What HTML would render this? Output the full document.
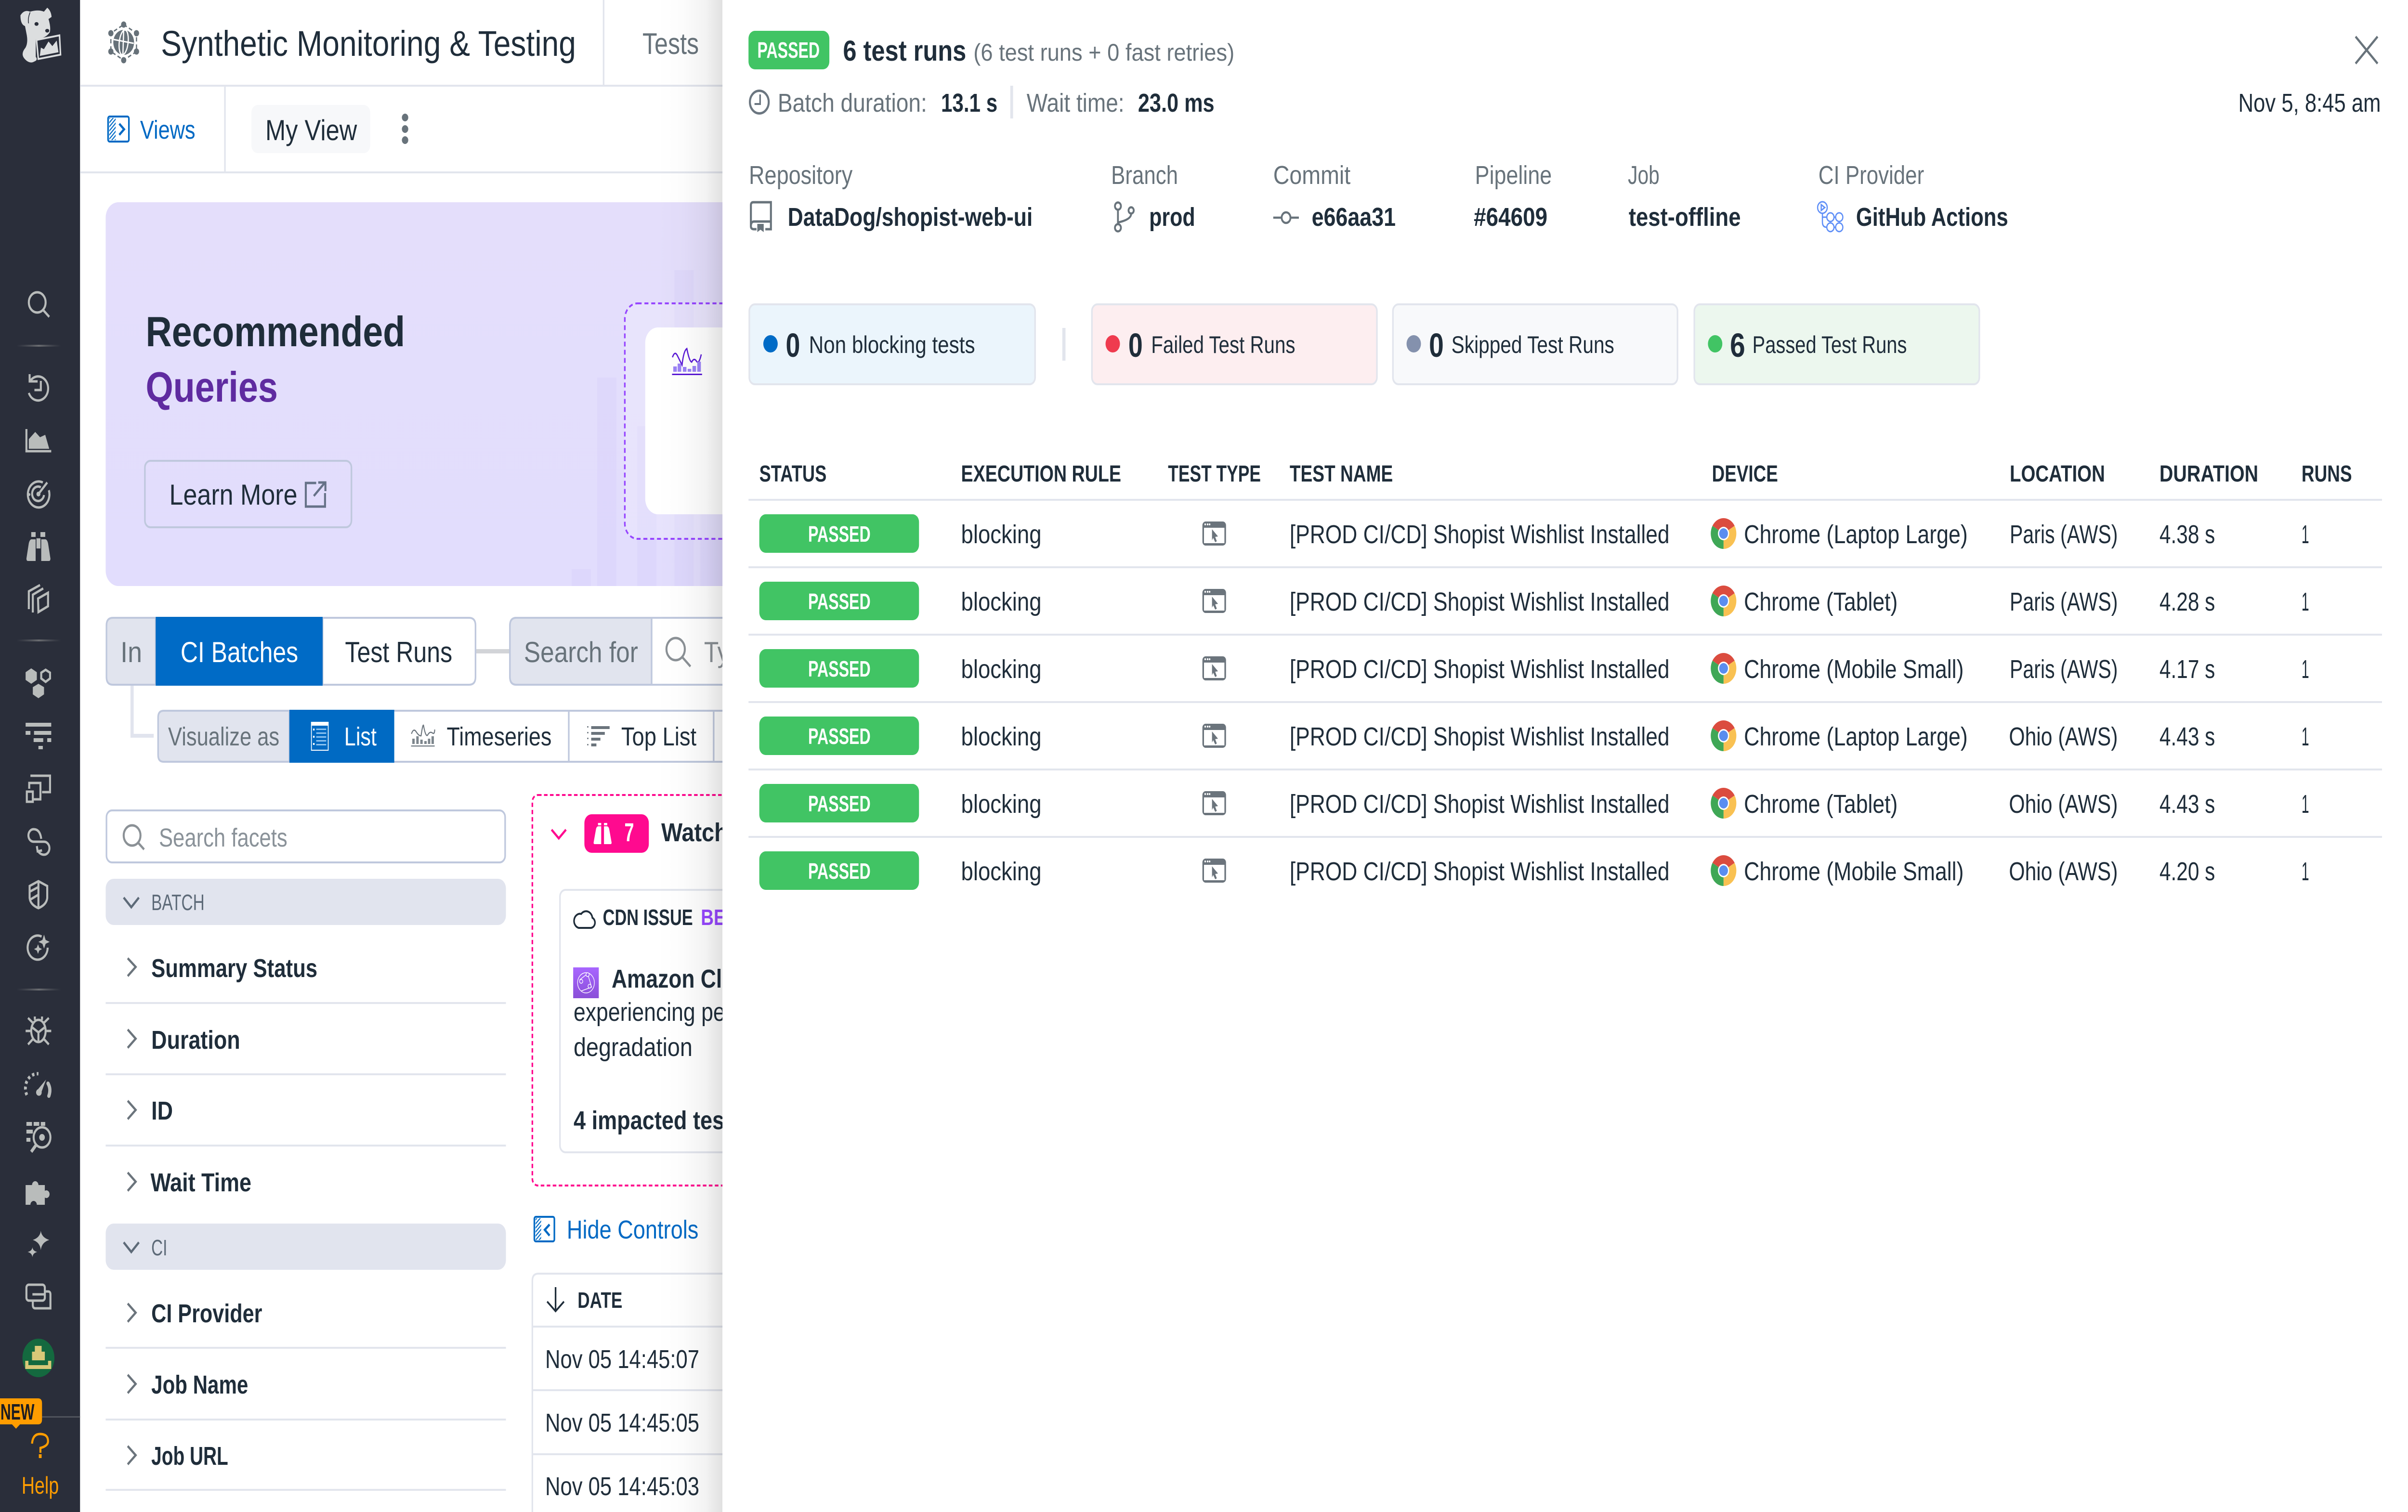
<!DOCTYPE html>
<html lang="en"><head><meta charset="utf-8"><title>Synthetic Monitoring &amp; Testing</title>
<style>
html,body{margin:0;padding:0;background:#fff}
svg{display:block;width:100vw;height:100vh}
text{font-family:"Liberation Sans","Noto Sans CJK JP",sans-serif;font-size:54px;fill:#1f2d3a;white-space:pre}
.b{font-weight:700}
.g{fill:#68737b}
.s{font-size:46px}
.t{font-size:48px;font-weight:700}
.m{font-size:50px}
.l{font-size:60px}
.i{fill:none;stroke:#b9bcbb;stroke-width:5}
.f{fill:#b9bcbb}
.bl{fill:#0069c4}
</style></head><body>
<svg xmlns="http://www.w3.org/2000/svg" viewBox="0 0 6016 3140" preserveAspectRatio="none">
<defs>
<pattern id="h" width="6" height="6" patternUnits="userSpaceOnUse" patternTransform="rotate(45)"><rect width="2.4" height="6" fill="#0069c4"/></pattern>
<linearGradient id="sd" x1="0" x2="1" y1="0" y2="0"><stop offset="0" stop-color="#000" stop-opacity="0"/><stop offset=".4" stop-color="#000" stop-opacity=".012"/><stop offset=".75" stop-color="#000" stop-opacity=".05"/><stop offset="1" stop-color="#000" stop-opacity=".12"/></linearGradient>
<linearGradient id="dv" x1="0" x2="1" y1="0" y2="0"><stop offset="0" stop-color="#55585f" stop-opacity="0"/><stop offset=".5" stop-color="#6a6c70"/><stop offset="1" stop-color="#55585f" stop-opacity="0"/></linearGradient>
<linearGradient id="am" x1="0" x2="0" y1="0" y2="1"><stop offset="0" stop-color="#a866ff"/><stop offset="1" stop-color="#8a4fd8"/></linearGradient>
<linearGradient id="bn" x1="0" x2="0" y1="0" y2="1"><stop offset="0" stop-color="#e4defb"/><stop offset="1" stop-color="#e2ddfd"/></linearGradient>
<g id="tt"><path d="M3004 1091a8 8 0 0 1 8-8h43a8 8 0 0 1 8 8v34a8 8 0 0 1-8 8h-43a8 8 0 0 1-8-8z" fill="#6b747c"/><rect x="3008" y="1096" width="51" height="32" fill="#fff"/><circle cx="3011" cy="1089" r="2" fill="#fff"/><circle cx="3017" cy="1089" r="2" fill="#fff"/><circle cx="3022" cy="1089" r="2" fill="#fff"/><path d="M3028 1099l15 15-7 1 4 9-4 2-5-9-3 5z" fill="#6b747c"/></g>
<g id="ch"><g transform="translate(4306 1108)"><path d="M0 0L-27.7-16A32 32 0 0 1 27.7-16Z" fill="#db4c3f"/><path d="M0 0L27.7-16A32 32 0 0 1 0 32Z" fill="#f9c152"/><path d="M0 0L0 32A32 32 0 0 1-27.7-16Z" fill="#3fa756"/><circle r="14" fill="#fff"/><circle r="11" fill="#5a8def"/></g></g>
</defs>

<rect width="6016" height="3140" fill="#fff"/>

<!-- sidebar -->
<rect width="200" height="3140" fill="#2a2e3a"/>
<g transform="scale(.638)" fill="#dcdedf">
<path d="M80 50Q95 30 118 38Q150 30 172 38L185 25Q200 35 202 55L190 62Q200 90 195 105Q180 125 140 128L140 185Q150 195 135 200Q115 210 95 190Q80 175 100 155Q110 140 105 115L98 85Q80 80 80 50Z"/>
<ellipse cx="143" cy="78" rx="8" ry="6" fill="#2a2e3a"/><ellipse cx="185" cy="100" rx="8" ry="6" fill="#2a2e3a"/>
<path d="M118 40Q108 60 112 76" fill="none" stroke="#2a2e3a" stroke-width="3"/>
<path d="M143 130L233 115L237 178L150 192Z" fill="#2a2e3a" stroke="#dcdedf" stroke-width="6"/>
<path d="M156 182L160 155L172 160L190 135L205 150L222 132L229 170Z"/>
</g>
<circle cx="93" cy="628" r="21" class="i"/><path d="M108 644L123 658" class="i"/>
<rect x="41" y="716" width="112" height="4" fill="url(#dv)"/>
<path d="M75 792A25 25 0 1 1 72 816" class="i"/><path d="M74 777V792H94M102 791V810H86" class="i"/>
<path d="M66 891V937H128" class="i"/><path d="M72 932V912L88 897L100 908L113 903L123 932Z" class="f"/>
<path d="M107 1002A27 27 0 1 0 122 1018M102 1012A15 15 0 1 0 110 1028" class="i"/><circle cx="96" cy="1026" r="5" class="f"/><path d="M96 1026L118 1002" class="i"/><circle cx="73" cy="1027" r="3" class="f"/>
<path d="M66 1160L72 1128Q74 1121 78 1120H89V1165H70Q66 1165 66 1160ZM126 1160L120 1128Q118 1121 114 1120H103V1165H122Q126 1165 126 1160Z" class="f"/><rect x="78" y="1105" width="11" height="10" class="f"/><rect x="101" y="1105" width="12" height="10" class="f"/><rect x="91" y="1118" width="10" height="21" class="f"/>
<path d="M72 1265V1228L100 1215M82 1272V1235L108 1222M95 1243L120 1231V1259L96 1271Z" class="i"/>
<rect x="41" y="1328" width="112" height="4" fill="url(#dv)"/>
<path d="M78 1388L92 1396V1412L78 1420L64 1412V1396Z" class="f"/><path d="M114 1391L125 1397V1409L114 1416L103 1409V1397Z" class="i"/><path d="M96 1420L110 1427V1442L96 1450L82 1442V1427Z" class="f"/>
<path d="M64 1501H128V1509H64ZM64 1518H76V1526H64ZM85 1518H128V1526H85ZM84 1533H108V1541H84ZM118 1533H128V1541H118ZM96 1549H107V1556H96Z" class="f"/>
<path d="M76 1611H125V1645H105M73 1638V1626H101V1660H84" class="i"/><rect x="67" y="1644" width="15" height="21" class="i"/>
<path d="M103 1742Q100 1722 84 1722A13 13 0 0 0 84 1748H110A13 13 0 0 1 110 1775Q100 1775 94 1766M92 1757L94 1768L105 1766" class="i"/>
<path d="M96 1830L118 1840V1865Q116 1879 96 1886Q76 1879 74 1865V1840Z" class="i"/><path d="M96 1830V1886M74 1852L96 1842M76 1868L96 1858" class="i"/>
<path d="M104 1945A25 25 0 1 0 119 1968" class="i"/><path d="M110 1941L114 1952L124 1956L114 1960L110 1970L106 1960L96 1956L106 1952ZM95 1961L98 1968L105 1971L98 1974L95 1981L92 1974L85 1971L92 1968Z" class="f"/>
<rect x="41" y="2053" width="112" height="4" fill="url(#dv)"/>
<ellipse cx="96" cy="2141" rx="18" ry="23" class="i"/><path d="M78 2132L96 2144L114 2132M96 2144V2164M64 2141H78M114 2141H128M70 2114L82 2124M122 2114L110 2124M70 2169L82 2158M122 2169L110 2158M87 2111V2118M105 2111V2118" class="i"/>
<path d="M67 2274A30 30 0 0 1 96 2230" fill="none" stroke="#b9bcbb" stroke-width="7" stroke-dasharray="6 6"/><path d="M115 2242L95 2262A7 7 0 1 0 104 2267Z" class="f"/><path d="M120 2250Q128 2262 122 2276" class="i" stroke-linecap="round" style="stroke-width:8"/>
<path d="M66 2330H80V2338H66ZM84 2330H98V2338H84ZM102 2330H113V2338H102ZM66 2346H82V2354H66ZM66 2363H76V2371H66Z" class="f"/><circle cx="105" cy="2362" r="21" class="i"/><circle cx="105" cy="2362" r="7" class="f"/><path d="M90 2378L78 2392" class="i" style="stroke-width:7"/>
<path d="M64 2461H80A8 8 0 1 1 96 2461H112V2473A8 8 0 1 1 112 2487V2502H92A8 8 0 1 0 76 2502H64Z" class="f"/>
<path d="M102 2556Q104 2570 123 2575Q104 2580 102 2596Q100 2580 82 2575Q100 2570 102 2556ZM81 2590Q82 2598 93 2600Q82 2602 81 2611Q80 2602 69 2600Q80 2598 81 2590Z" class="f"/>
<rect x="66" y="2668" width="46" height="33" rx="6" class="i"/><path d="M81 2688H112M112 2682H120Q126 2682 126 2688V2717H88Q82 2717 82 2710V2701" class="i"/>
<circle cx="96" cy="2820" r="40" fill="#14693f"/><path d="M87 2795H104V2807H112V2825H80V2807H87ZM63 2826H71V2835H120V2826H128V2843H63Z" fill="#d8c878"/>
<rect x="105" y="2941" width="95" height="3" fill="#50535c"/>
<path d="M0 2904H95Q105 2904 105 2914V2948Q105 2958 95 2958H50L40 2967L30 2958H0Z" fill="#ff9d00"/>
<text x="1" y="2948" class="b s" textLength="85" lengthAdjust="spacingAndGlyphs" style="fill:#1c1c22">NEW</text>
<path d="M80 2998Q82 2978 100 2978Q120 2978 120 2993Q120 3003 101 3007V3017" fill="none" stroke="#ff9d00" stroke-width="5"/><rect x="97" y="3020" width="7" height="8" fill="#ff9d00"/>
<text x="54" y="3102" class="m" textLength="93" lengthAdjust="spacingAndGlyphs" style="fill:#ff9d00">Help</text>

<!-- header -->
<rect x="200" y="176" width="1700" height="4" fill="#e2e5ed"/>
<rect x="200" y="356" width="1700" height="4" fill="#e2e5ed"/>
<rect x="560" y="180" width="4" height="176" fill="#e2e5ed"/>
<rect x="1506" y="0" width="4" height="176" fill="#e2e5ed"/>
<path d="M309 51L341 69V107L309 125L277 107V69Z" fill="none" stroke="#667179" stroke-width="3" stroke-dasharray="9 6"/>
<g fill="#667179"><circle cx="309" cy="51" r="6.5"/><circle cx="341" cy="69" r="6.5"/><circle cx="341" cy="107" r="6.5"/><circle cx="309" cy="125" r="6.5"/><circle cx="277" cy="107" r="6.5"/><circle cx="277" cy="69" r="6.5"/><circle cx="309" cy="88" r="26"/></g>
<ellipse cx="309" cy="88" rx="11" ry="26" fill="none" stroke="#fff" stroke-width="3" transform="rotate(8 309 88)"/><path d="M284 82L334 90M309 62L307 114" stroke="#fff" stroke-width="3" fill="none"/>
<text x="402" y="116" style="font-size:74px" textLength="1037" lengthAdjust="spacingAndGlyphs">Synthetic Monitoring &amp; Testing</text>
<text x="1605" y="112" style="font-size:62px" class="g" textLength="141" lengthAdjust="spacingAndGlyphs">Tests</text>
<rect x="270" y="242" width="52" height="52" rx="4" fill="none" stroke="#0069c4" stroke-width="4"/><rect x="273" y="245" width="16" height="46" fill="url(#h)"/><path d="M298 257L310 268.5L298 280" fill="none" stroke="#0069c4" stroke-width="5"/>
<text x="350" y="288" class="bl" textLength="138" lengthAdjust="spacingAndGlyphs">Views</text>
<rect x="628" y="218" width="297" height="100" rx="16" fill="#f7f8fa"/>
<text x="663" y="291" style="font-size:60px" textLength="229" lengthAdjust="spacingAndGlyphs">My View</text>
<g fill="#68737b"><circle cx="1012" cy="244" r="8"/><circle cx="1012" cy="268" r="8"/><circle cx="1012" cy="291" r="8"/></g>

<!-- banner -->
<path d="M296 420H1900V1217H296A32 32 0 0 1 264 1185V452A32 32 0 0 1 296 420Z" fill="url(#bn)"/>
<g fill="#7f5fe0" fill-opacity=".045"><rect x="1428" y="1182" width="48" height="35"/><rect x="1492" y="784" width="48" height="433"/><rect x="1592" y="885" width="48" height="332"/><rect x="1685" y="561" width="48" height="656"/><rect x="1750" y="1040" width="60" height="177"/></g>
<rect x="1561" y="630" width="400" height="489" rx="32" fill="#fff" fill-opacity=".2" stroke="#9747ff" stroke-width="4" stroke-dasharray="10 7"/>
<path d="M1644 680H1900V1068H1644A32 32 0 0 1 1612 1036V712A32 32 0 0 1 1644 680Z" fill="#fff"/>
<path d="M1680 742Q1686 728 1692 738T1704 758Q1708 728 1716 724Q1722 750 1728 752Q1734 742 1740 750T1752 736" fill="none" stroke="#5a19d6" stroke-width="3"/>
<g fill="#9b82f6"><rect x="1682" y="761" width="9" height="11"/><rect x="1693" y="755" width="9" height="17"/><rect x="1706" y="762" width="9" height="10"/><rect x="1718" y="766" width="9" height="6"/><rect x="1730" y="760" width="9" height="12"/><rect x="1742" y="751" width="9" height="21"/></g>
<rect x="1679" y="776" width="75" height="3" fill="#5a19d6"/>
<text x="364" y="719" class="b" style="font-size:88px" textLength="648" lengthAdjust="spacingAndGlyphs">Recommended</text>
<text x="364" y="834" class="b" style="font-size:88px;fill:#5f2ba0" textLength="330" lengthAdjust="spacingAndGlyphs">Queries</text>
<rect x="362" y="957" width="516" height="138" rx="14" fill="none" stroke="#bfc8dd" stroke-width="4"/>
<text x="423" y="1048" class="l" textLength="320" lengthAdjust="spacingAndGlyphs">Learn More</text>
<path d="M790 1003H764V1052H812V1024M784 1030L812 1002M795 1002H813V1020" fill="none" stroke="#667288" stroke-width="5"/>

<!-- query row -->
<path d="M806 1283H1172Q1188 1283 1188 1299V1406Q1188 1422 1172 1422H806Z" fill="#fff" stroke="#bfc8dd" stroke-width="4"/>
<path d="M389 1283H282Q266 1283 266 1299V1406Q266 1422 282 1422H389Z" fill="#e1e4ee" stroke="#bfc8dd" stroke-width="4"/>
<rect x="389" y="1281" width="417" height="143" fill="#006ac3"/><rect x="392" y="1284" width="411" height="137" fill="#006bc6"/>
<text x="301" y="1375" class="l g" textLength="54" lengthAdjust="spacingAndGlyphs">In</text>
<text x="451" y="1375" class="l" style="fill:#fff" textLength="294" lengthAdjust="spacingAndGlyphs">CI Batches</text>
<text x="862" y="1375" class="l" textLength="268" lengthAdjust="spacingAndGlyphs">Test Runs</text>
<rect x="1190" y="1348" width="83" height="9" fill="#d2d4d8"/>
<path d="M1900 1283H1290Q1274 1283 1274 1299V1406Q1274 1422 1290 1422H1900Z" fill="#fff" stroke="#bfc8dd" stroke-width="4"/>
<path d="M1628 1283H1290Q1274 1283 1274 1299V1406Q1274 1422 1290 1422H1628Z" fill="#e1e4ee" stroke="#bfc8dd" stroke-width="4"/>
<text x="1309" y="1375" class="l g" textLength="285" lengthAdjust="spacingAndGlyphs">Search for</text>
<circle cx="1688" cy="1348" r="23" fill="none" stroke="#8b9196" stroke-width="5"/><path d="M1705 1365L1725 1384" stroke="#8b9196" stroke-width="5"/>
<text x="1759" y="1375" class="l" style="fill:#8b9196">Type</text>

<path d="M330 1424V1528H384" fill="none" stroke="#e1e4ee" stroke-width="8"/>
<rect x="723" y="1476" width="1180" height="106" fill="#fff" stroke="#bfc8dd" stroke-width="4"/>
<rect x="1419" y="1476" width="4" height="106" fill="#bfc8dd"/><rect x="1781" y="1476" width="4" height="106" fill="#bfc8dd"/>
<path d="M723 1476H409Q395 1476 395 1490V1568Q395 1582 409 1582H723Z" fill="#e1e4ee" stroke="#bfc8dd" stroke-width="4"/>
<text x="420" y="1548" class="g" textLength="278" lengthAdjust="spacingAndGlyphs">Visualize as</text>
<rect x="723" y="1474" width="262" height="110" fill="#006ac3"/>
<rect x="778" y="1500" width="42" height="58" fill="none" stroke="#fff" stroke-width="2"/><rect x="778" y="1500" width="42" height="7" fill="#fff"/><g fill="#8fc3f0"><rect x="790" y="1513" width="25" height="3"/><rect x="790" y="1521" width="25" height="3"/><rect x="790" y="1529" width="25" height="3"/><rect x="790" y="1537" width="25" height="3"/><rect x="790" y="1545" width="25" height="3"/></g><g fill="#fff"><rect x="782" y="1513" width="4" height="4"/><rect x="782" y="1528" width="4" height="4"/><rect x="782" y="1543" width="4" height="4"/></g>
<text x="860" y="1548" style="fill:#fff" textLength="81" lengthAdjust="spacingAndGlyphs">List</text>
<path d="M1028 1524Q1033 1511 1040 1520T1052 1528Q1056 1504 1058 1506Q1063 1530 1068 1527Q1074 1518 1080 1522T1086 1515" fill="none" stroke="#6b747c" stroke-width="2.5"/>
<g fill="#7d868d"><rect x="1030" y="1534" width="6" height="11"/><rect x="1040" y="1529" width="6" height="16"/><rect x="1050" y="1536" width="6" height="9"/><rect x="1060" y="1539" width="6" height="6"/><rect x="1069" y="1534" width="6" height="11"/><rect x="1078" y="1529" width="6" height="16"/><rect x="1027" y="1548" width="59" height="2.5"/></g>
<text x="1116" y="1548" textLength="262" lengthAdjust="spacingAndGlyphs">Timeseries</text>
<g fill="#6b747c"><rect x="1467" y="1508" width="3" height="3"/><rect x="1467" y="1520" width="3" height="3"/><rect x="1467" y="1532" width="3" height="3"/><rect x="1467" y="1545" width="3" height="3"/><rect x="1477" y="1508" width="46" height="6"/><rect x="1477" y="1520" width="34" height="6"/><rect x="1477" y="1532" width="23" height="6"/><rect x="1477" y="1544" width="13" height="6"/></g>
<text x="1552" y="1548" textLength="188" lengthAdjust="spacingAndGlyphs">Top List</text>

<!-- facets -->
<rect x="266" y="1683" width="996" height="108" rx="14" fill="#fff" stroke="#bfc8dd" stroke-width="4"/>
<circle cx="330" cy="1735" r="21" fill="none" stroke="#8b9196" stroke-width="5"/><path d="M345 1750L360 1764" stroke="#8b9196" stroke-width="5"/>
<text x="397" y="1758" style="fill:#8a9299" textLength="321" lengthAdjust="spacingAndGlyphs">Search facets</text>
<rect x="264" y="1825" width="1000" height="96" rx="20" fill="#e1e4ee"/>
<path d="M309 1864L328 1884L347 1864" fill="none" stroke="#5d6a78" stroke-width="5"/>
<text x="378" y="1890" class="s" style="fill:#5d6a78" textLength="133" lengthAdjust="spacingAndGlyphs">BATCH</text>
<g fill="none" stroke="#6b747c" stroke-width="5"><path d="M319 1990L339 2008L319 2027M319 2138L339 2157L319 2176M319 2286L339 2305L319 2324M319 2435L339 2454L319 2473M319 2707L339 2726L319 2745M319 2855L339 2874L319 2893M319 3003L339 3022L319 3041"/></g>
<text x="378" y="2029" class="b" textLength="415" lengthAdjust="spacingAndGlyphs">Summary Status</text>
<rect x="264" y="2081" width="1000" height="4" fill="#e2e5ed"/>
<text x="378" y="2178" class="b" textLength="222" lengthAdjust="spacingAndGlyphs">Duration</text>
<rect x="264" y="2229" width="1000" height="4" fill="#e2e5ed"/>
<text x="378" y="2325" class="b" textLength="54" lengthAdjust="spacingAndGlyphs">ID</text>
<rect x="264" y="2377" width="1000" height="4" fill="#e2e5ed"/>
<text x="376" y="2474" class="b" textLength="252" lengthAdjust="spacingAndGlyphs">Wait Time</text>
<rect x="264" y="2541" width="1000" height="96" rx="20" fill="#e1e4ee"/>
<path d="M309 2580L328 2600L347 2580" fill="none" stroke="#5d6a78" stroke-width="5"/>
<text x="378" y="2607" class="s" style="fill:#5d6a78" textLength="40" lengthAdjust="spacingAndGlyphs">CI</text>
<text x="378" y="2746" class="b" textLength="277" lengthAdjust="spacingAndGlyphs">CI Provider</text>
<rect x="264" y="2797" width="1000" height="4" fill="#e2e5ed"/>
<text x="378" y="2894" class="b" textLength="242" lengthAdjust="spacingAndGlyphs">Job Name</text>
<rect x="264" y="2946" width="1000" height="4" fill="#e2e5ed"/>
<text x="378" y="3042" class="b" textLength="192" lengthAdjust="spacingAndGlyphs">Job URL</text>
<rect x="264" y="3092" width="1000" height="4" fill="#e2e5ed"/>

<!-- watchdog -->
<rect x="1330" y="1651" width="800" height="811" rx="14" fill="none" stroke="#ff0a8f" stroke-width="4" stroke-dasharray="9 6"/>
<path d="M1378 1723L1396 1741L1414 1723" fill="none" stroke="#ff0a8f" stroke-width="5"/>
<rect x="1460" y="1691" width="161" height="80" rx="18" fill="#ff0a8f"/>
<path d="M1483 1750L1489 1722Q1490 1717 1494 1716H1502V1753H1486Q1483 1753 1483 1750ZM1528 1750L1522 1722Q1521 1717 1517 1716H1509V1753H1525Q1528 1753 1528 1750ZM1494 1709H1502V1714H1494ZM1509 1709H1517V1714H1509Z" fill="#fff"/>
<text x="1560" y="1747" class="b" style="fill:#fff" textLength="24" lengthAdjust="spacingAndGlyphs">7</text>
<text x="1652" y="1747" class="b" textLength="270" lengthAdjust="spacingAndGlyphs">Watchdog</text>
<rect x="1399" y="1848" width="700" height="545" rx="14" fill="#fff" stroke="#e2e5ed" stroke-width="4"/>
<path d="M1446 1927H1476A11 11 0 0 0 1480 1906A16 16 0 0 0 1452 1898A13 13 0 0 0 1446 1927Z" fill="none" stroke="#1f2d3a" stroke-width="4"/>
<text x="1506" y="1921" class="s b" textLength="225" lengthAdjust="spacingAndGlyphs">CDN ISSUE</text>
<text x="1751" y="1921" class="s b" style="fill:#9747ff" textLength="118" lengthAdjust="spacingAndGlyphs">BETA</text>
<rect x="1432" y="2009" width="64" height="64" fill="url(#am)"/>
<circle cx="1464" cy="2041" r="21" fill="none" stroke="#fff" stroke-width="1.5"/><path d="M1448 2035L1468 2022L1478 2050L1452 2058" fill="none" stroke="#fff" stroke-width="1.5"/><circle cx="1468" cy="2024" r="4" fill="#9a5df0" stroke="#fff" stroke-width="1.5"/><circle cx="1452" cy="2038" r="4" fill="#9a5df0" stroke="#fff" stroke-width="1.5"/><circle cx="1473" cy="2048" r="4" fill="#9a5df0" stroke="#fff" stroke-width="1.5"/>
<text x="1528" y="2051" class="b" textLength="510" lengthAdjust="spacingAndGlyphs">Amazon CloudFront</text>
<text x="1433" y="2120" textLength="620" lengthAdjust="spacingAndGlyphs">experiencing performance</text>
<text x="1433" y="2193" textLength="297" lengthAdjust="spacingAndGlyphs">degradation</text>
<text x="1433" y="2345" class="b" textLength="425" lengthAdjust="spacingAndGlyphs">4 impacted tests</text>
<rect x="1335" y="2527" width="50" height="51" rx="4" fill="none" stroke="#0069c4" stroke-width="4"/><rect x="1338" y="2530" width="14" height="45" fill="url(#h)"/><path d="M1373 2543L1361 2554L1373 2566" fill="none" stroke="#0069c4" stroke-width="5"/>
<text x="1416" y="2572" class="bl" textLength="329" lengthAdjust="spacingAndGlyphs">Hide Controls</text>
<path d="M1900 2645H1345Q1330 2645 1330 2660V3140" fill="none" stroke="#e2e5ed" stroke-width="4"/>
<path d="M1388 2673V2722M1367 2703L1388 2723L1409 2703" fill="none" stroke="#1f2d3a" stroke-width="4"/>
<text x="1443" y="2716" class="s b" textLength="112" lengthAdjust="spacingAndGlyphs">DATE</text>
<rect x="1332" y="2753" width="560" height="4" fill="#e2e5ed"/><rect x="1332" y="2885" width="560" height="4" fill="#e2e5ed"/><rect x="1332" y="3018" width="560" height="4" fill="#e2e5ed"/>
<text x="1362" y="2841" textLength="385" lengthAdjust="spacingAndGlyphs">Nov 05 14:45:07</text>
<text x="1362" y="2973" textLength="385" lengthAdjust="spacingAndGlyphs">Nov 05 14:45:05</text>
<text x="1362" y="3105" textLength="385" lengthAdjust="spacingAndGlyphs">Nov 05 14:45:03</text>

<!-- shadow + panel -->
<rect x="1640" y="0" width="165" height="3140" fill="url(#sd)"/>
<rect x="1805" y="0" width="4211" height="3140" fill="#fff"/>

<rect x="1870" y="64" width="202" height="80" rx="16" fill="#41c464"/>
<text x="1892" y="120" class="s b" style="fill:#fff" textLength="156" lengthAdjust="spacingAndGlyphs">PASSED</text>
<text x="2106" y="126" class="b" style="font-size:60px" textLength="308" lengthAdjust="spacingAndGlyphs">6 test runs</text>
<text x="2432" y="126" class="m g" textLength="652" lengthAdjust="spacingAndGlyphs">(6 test runs + 0 fast retries)</text>
<circle cx="1897" cy="212" r="23.5" fill="none" stroke="#6b7680" stroke-width="5"/><path d="M1899 196V216H1885" fill="none" stroke="#6b7680" stroke-width="4"/>
<text x="1943" y="232" class="g" textLength="373" lengthAdjust="spacingAndGlyphs">Batch duration:</text>
<text x="2351" y="232" class="b" textLength="141" lengthAdjust="spacingAndGlyphs">13.1 s</text>
<rect x="2524" y="178" width="7" height="68" fill="#e2e5ed"/>
<text x="2565" y="232" class="g" textLength="244" lengthAdjust="spacingAndGlyphs">Wait time:</text>
<text x="2843" y="232" class="b" textLength="191" lengthAdjust="spacingAndGlyphs">23.0 ms</text>
<path d="M5885 76L5940 132M5940 76L5885 132" stroke="#68737b" stroke-width="5" fill="none"/>
<text x="5592" y="232" textLength="356" lengthAdjust="spacingAndGlyphs">Nov 5, 8:45 am</text>

<text x="1871" y="382" class="g" textLength="259" lengthAdjust="spacingAndGlyphs">Repository</text>
<text x="2776" y="382" class="g" textLength="167" lengthAdjust="spacingAndGlyphs">Branch</text>
<text x="3181" y="382" class="g" textLength="193" lengthAdjust="spacingAndGlyphs">Commit</text>
<text x="3685" y="382" class="g" textLength="192" lengthAdjust="spacingAndGlyphs">Pipeline</text>
<text x="4067" y="382" class="g" textLength="79" lengthAdjust="spacingAndGlyphs">Job</text>
<text x="4543" y="382" class="g" textLength="264" lengthAdjust="spacingAndGlyphs">CI Provider</text>
<path d="M1876 470V426Q1876 420 1882 420H1926V460H1884Q1876 460 1876 470Q1876 476 1884 476H1890M1912 476H1926V460" fill="none" stroke="#68737b" stroke-width="5"/><path d="M1892 465H1908V482L1900 477L1892 482Z" fill="#68737b"/>
<text x="1968" y="469" class="b" textLength="612" lengthAdjust="spacingAndGlyphs">DataDog/shopist-web-ui</text>
<g fill="none" stroke="#68737b" stroke-width="4.5"><circle cx="2793" cy="428" r="7.5"/><circle cx="2793" cy="473" r="7.5"/><circle cx="2826" cy="437" r="6.5"/><path d="M2793 436V465M2826 444Q2826 456 2793 462"/></g>
<text x="2871" y="469" class="b" textLength="115" lengthAdjust="spacingAndGlyphs">prod</text>
<path d="M3181 452H3245" stroke="#68737b" stroke-width="4.5"/><circle cx="3213" cy="452" r="11" fill="#fff" stroke="#68737b" stroke-width="4.5"/>
<text x="3277" y="469" class="b" textLength="210" lengthAdjust="spacingAndGlyphs">e66aa31</text>
<text x="3682" y="469" class="b" textLength="184" lengthAdjust="spacingAndGlyphs">#64609</text>
<text x="4069" y="469" class="b" textLength="280" lengthAdjust="spacingAndGlyphs">test-offline</text>
<g fill="none" stroke="#5f8ff7" stroke-width="3"><circle cx="4553" cy="431" r="12"/><circle cx="4573" cy="451" r="9"/><circle cx="4595" cy="451" r="9"/><circle cx="4573" cy="472" r="9"/><circle cx="4595" cy="472" r="9"/><path d="M4553 443V461Q4553 472 4564 472M4553 451H4564M4582 451H4586M4582 472H4586M4550 425L4559 431L4550 437Z"/></g>
<text x="4637" y="469" class="b" textLength="380" lengthAdjust="spacingAndGlyphs">GitHub Actions</text>

<rect x="1872" y="632" width="714" height="166" rx="14" fill="#ebf5fc" stroke="#e2e5ed" stroke-width="4"/>
<circle cx="1925" cy="714" r="18" fill="#006bc6"/>
<text x="1963" y="741" class="b" style="font-size:70px" textLength="36" lengthAdjust="spacingAndGlyphs">0</text>
<text x="2021" y="733" class="m" textLength="415" lengthAdjust="spacingAndGlyphs">Non blocking tests</text>
<rect x="2654" y="681" width="8" height="68" fill="#e2e5ed"/>
<rect x="2728" y="632" width="712" height="166" rx="14" fill="#fdeef0" stroke="#e2e5ed" stroke-width="4"/>
<circle cx="2780" cy="714" r="18" fill="#ef3b4f"/>
<text x="2819" y="741" class="b" style="font-size:70px" textLength="36" lengthAdjust="spacingAndGlyphs">0</text>
<text x="2876" y="733" class="m" textLength="360" lengthAdjust="spacingAndGlyphs">Failed Test Runs</text>
<rect x="3480" y="632" width="711" height="166" rx="14" fill="#f8f9fb" stroke="#e2e5ed" stroke-width="4"/>
<circle cx="3532" cy="714" r="18" fill="#8491ad"/>
<text x="3570" y="741" class="b" style="font-size:70px" textLength="37" lengthAdjust="spacingAndGlyphs">0</text>
<text x="3626" y="733" class="m" textLength="407" lengthAdjust="spacingAndGlyphs">Skipped Test Runs</text>
<rect x="4233" y="632" width="712" height="166" rx="14" fill="#ecf7ee" stroke="#e2e5ed" stroke-width="4"/>
<circle cx="4285" cy="714" r="18" fill="#41c464"/>
<text x="4322" y="741" class="b" style="font-size:70px" textLength="38" lengthAdjust="spacingAndGlyphs">6</text>
<text x="4378" y="733" class="m" textLength="386" lengthAdjust="spacingAndGlyphs">Passed Test Runs</text>

<!-- table -->
<text x="1897" y="1000" class="t" textLength="168" lengthAdjust="spacingAndGlyphs">STATUS</text>
<text x="2401" y="1000" class="t" textLength="400" lengthAdjust="spacingAndGlyphs">EXECUTION RULE</text>
<text x="2918" y="1000" class="t" textLength="232" lengthAdjust="spacingAndGlyphs">TEST TYPE</text>
<text x="3222" y="1000" class="t" textLength="258" lengthAdjust="spacingAndGlyphs">TEST NAME</text>
<text x="4277" y="1000" class="t" textLength="165" lengthAdjust="spacingAndGlyphs">DEVICE</text>
<text x="5021" y="1000" class="t" textLength="238" lengthAdjust="spacingAndGlyphs">LOCATION</text>
<text x="5395" y="1000" class="t" textLength="247" lengthAdjust="spacingAndGlyphs">DURATION</text>
<text x="5750" y="1000" class="t" textLength="126" lengthAdjust="spacingAndGlyphs">RUNS</text>
<g fill="#e2e5ed"><rect x="1870" y="1036" width="4081" height="4"/><rect x="1870" y="1176" width="4081" height="4"/><rect x="1870" y="1316" width="4081" height="4"/><rect x="1870" y="1456" width="4081" height="4"/><rect x="1870" y="1596" width="4081" height="4"/><rect x="1870" y="1736" width="4081" height="4"/></g>

<g fill="#41c464"><rect x="1897" y="1068" width="399" height="80" rx="16"/><rect x="1897" y="1208" width="399" height="80" rx="16"/><rect x="1897" y="1348" width="399" height="80" rx="16"/><rect x="1897" y="1488" width="399" height="80" rx="16"/><rect x="1897" y="1628" width="399" height="80" rx="16"/><rect x="1897" y="1768" width="399" height="80" rx="16"/></g>
<use href="#tt"/><use href="#tt" y="140"/><use href="#tt" y="280"/><use href="#tt" y="420"/><use href="#tt" y="560"/><use href="#tt" y="700"/>
<use href="#ch"/><use href="#ch" y="140"/><use href="#ch" y="280"/><use href="#ch" y="420"/><use href="#ch" y="560"/><use href="#ch" y="700"/>

<text x="2019" y="1125" class="s b" style="fill:#fff" textLength="156" lengthAdjust="spacingAndGlyphs">PASSED</text>
<text x="2401" y="1128" textLength="201" lengthAdjust="spacingAndGlyphs">blocking</text>
<text x="3222" y="1128" textLength="949" lengthAdjust="spacingAndGlyphs">[PROD CI/CD] Shopist Wishlist Installed</text>
<text x="4357" y="1128" textLength="559" lengthAdjust="spacingAndGlyphs">Chrome (Laptop Large)</text>
<text x="5021" y="1128" textLength="270" lengthAdjust="spacingAndGlyphs">Paris (AWS)</text>
<text x="5395" y="1128" textLength="139" lengthAdjust="spacingAndGlyphs">4.38 s</text>
<text x="5750" y="1128" textLength="19" lengthAdjust="spacingAndGlyphs">1</text>

<text x="2019" y="1265" class="s b" style="fill:#fff" textLength="156" lengthAdjust="spacingAndGlyphs">PASSED</text>
<text x="2401" y="1268" textLength="201" lengthAdjust="spacingAndGlyphs">blocking</text>
<text x="3222" y="1268" textLength="949" lengthAdjust="spacingAndGlyphs">[PROD CI/CD] Shopist Wishlist Installed</text>
<text x="4357" y="1268" textLength="384" lengthAdjust="spacingAndGlyphs">Chrome (Tablet)</text>
<text x="5021" y="1268" textLength="270" lengthAdjust="spacingAndGlyphs">Paris (AWS)</text>
<text x="5395" y="1268" textLength="139" lengthAdjust="spacingAndGlyphs">4.28 s</text>
<text x="5750" y="1268" textLength="19" lengthAdjust="spacingAndGlyphs">1</text>

<text x="2019" y="1405" class="s b" style="fill:#fff" textLength="156" lengthAdjust="spacingAndGlyphs">PASSED</text>
<text x="2401" y="1408" textLength="201" lengthAdjust="spacingAndGlyphs">blocking</text>
<text x="3222" y="1408" textLength="949" lengthAdjust="spacingAndGlyphs">[PROD CI/CD] Shopist Wishlist Installed</text>
<text x="4357" y="1408" textLength="549" lengthAdjust="spacingAndGlyphs">Chrome (Mobile Small)</text>
<text x="5021" y="1408" textLength="270" lengthAdjust="spacingAndGlyphs">Paris (AWS)</text>
<text x="5395" y="1408" textLength="139" lengthAdjust="spacingAndGlyphs">4.17 s</text>
<text x="5750" y="1408" textLength="19" lengthAdjust="spacingAndGlyphs">1</text>

<text x="2019" y="1545" class="s b" style="fill:#fff" textLength="156" lengthAdjust="spacingAndGlyphs">PASSED</text>
<text x="2401" y="1548" textLength="201" lengthAdjust="spacingAndGlyphs">blocking</text>
<text x="3222" y="1548" textLength="949" lengthAdjust="spacingAndGlyphs">[PROD CI/CD] Shopist Wishlist Installed</text>
<text x="4357" y="1548" textLength="559" lengthAdjust="spacingAndGlyphs">Chrome (Laptop Large)</text>
<text x="5019" y="1548" textLength="272" lengthAdjust="spacingAndGlyphs">Ohio (AWS)</text>
<text x="5395" y="1548" textLength="139" lengthAdjust="spacingAndGlyphs">4.43 s</text>
<text x="5750" y="1548" textLength="19" lengthAdjust="spacingAndGlyphs">1</text>

<text x="2019" y="1685" class="s b" style="fill:#fff" textLength="156" lengthAdjust="spacingAndGlyphs">PASSED</text>
<text x="2401" y="1688" textLength="201" lengthAdjust="spacingAndGlyphs">blocking</text>
<text x="3222" y="1688" textLength="949" lengthAdjust="spacingAndGlyphs">[PROD CI/CD] Shopist Wishlist Installed</text>
<text x="4357" y="1688" textLength="384" lengthAdjust="spacingAndGlyphs">Chrome (Tablet)</text>
<text x="5019" y="1688" textLength="272" lengthAdjust="spacingAndGlyphs">Ohio (AWS)</text>
<text x="5395" y="1688" textLength="139" lengthAdjust="spacingAndGlyphs">4.43 s</text>
<text x="5750" y="1688" textLength="19" lengthAdjust="spacingAndGlyphs">1</text>

<text x="2019" y="1825" class="s b" style="fill:#fff" textLength="156" lengthAdjust="spacingAndGlyphs">PASSED</text>
<text x="2401" y="1828" textLength="201" lengthAdjust="spacingAndGlyphs">blocking</text>
<text x="3222" y="1828" textLength="949" lengthAdjust="spacingAndGlyphs">[PROD CI/CD] Shopist Wishlist Installed</text>
<text x="4357" y="1828" textLength="549" lengthAdjust="spacingAndGlyphs">Chrome (Mobile Small)</text>
<text x="5019" y="1828" textLength="272" lengthAdjust="spacingAndGlyphs">Ohio (AWS)</text>
<text x="5395" y="1828" textLength="139" lengthAdjust="spacingAndGlyphs">4.20 s</text>
<text x="5750" y="1828" textLength="19" lengthAdjust="spacingAndGlyphs">1</text>
</svg>
</body></html>
